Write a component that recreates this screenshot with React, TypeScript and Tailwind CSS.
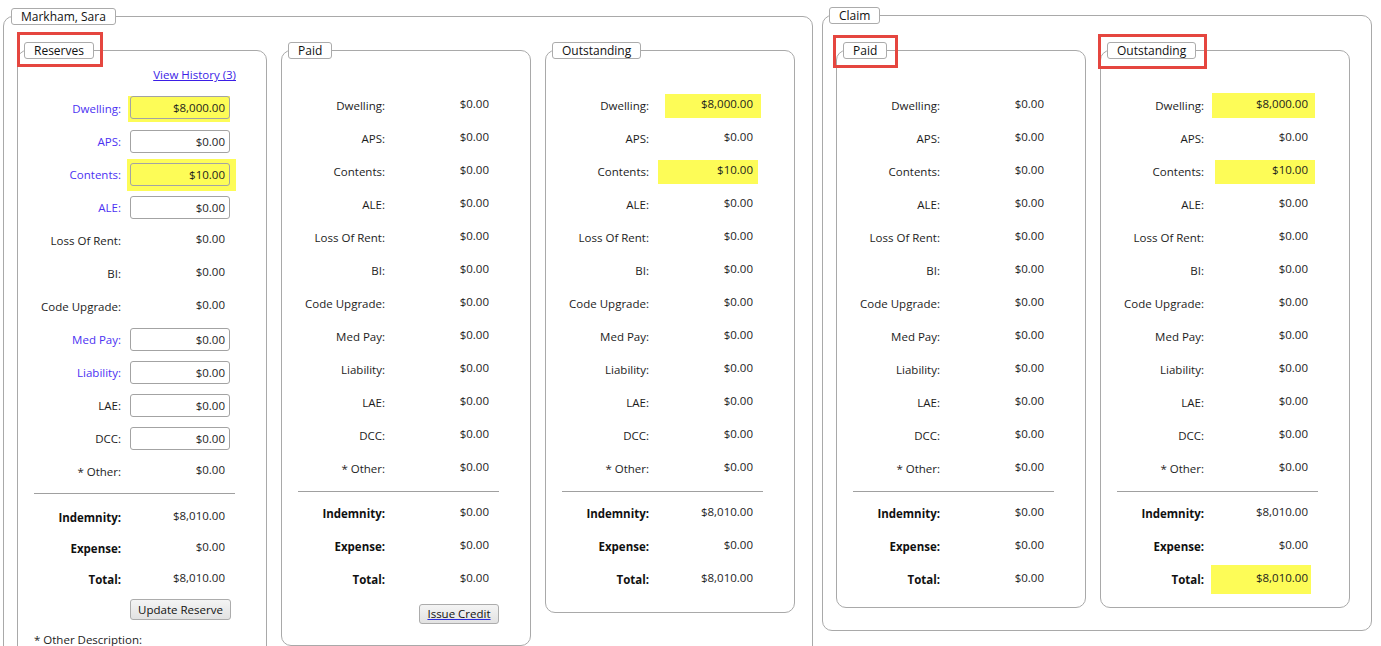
import React from 'react';

type Row = {
  label: string;
  value: string;
  blue?: boolean;
  input?: boolean;
  hl?: string;
};

const names = ['Dwelling', 'APS', 'Contents', 'ALE', 'Loss Of Rent', 'BI', 'Code Upgrade', 'Med Pay', 'Liability', 'LAE', 'DCC'];

const zeroRows = (): Row[] => names.map((n) => ({ label: n, value: '$0.00' }));

function Legend({ title, mark, ml = 'ml-[6px]' }: { title: string; mark?: string; ml?: string }) {
  return (
    <legend
      className={`relative ${ml} h-[17px] rounded-[3px] border border-[#ababab] bg-white px-[9px] text-[12px] leading-[15px] text-[#111]`}
    >
      {title}
      {mark && <span className={`absolute border-[3px] border-[#e5463f] ${mark}`} />}
    </legend>
  );
}

function Label({ text, blue, bold }: { text: string; blue?: boolean; bold?: boolean }) {
  const star = text.startsWith('* ');
  return (
    <div
      className={`w-[103px] shrink-0 text-right ${bold ? 'font-bold text-[#111]' : blue ? 'text-[#4b32f2]' : 'text-[#1c1c1c]'}`}
    >
      {star ? (
        <>
          <span>* </span>
          {text.slice(2)}:
        </>
      ) : (
        `${text}:`
      )}
    </div>
  );
}

function ValueRow({ row }: { row: Row }) {
  return (
    <div className="flex h-[33px] items-center gap-[9px]">
      <Label text={row.label} blue={row.blue} />
      {row.input ? (
        <div className={`flex w-[100px] items-center ${row.hl ?? ''}`}>
          <div
            className={`h-[23px] w-[100px] rounded-[3px] border border-[#a3a3a3] pr-[4px] text-right leading-[21px] ${row.hl ? 'bg-[#fdfc57]' : 'bg-white'}`}
          >
            {row.value}
          </div>
        </div>
      ) : row.hl ? (
        <div className={`flex items-center justify-end bg-[#fdfc57] ${row.hl}`}>
          <span className="pb-[3px]">{row.value}</span>
        </div>
      ) : (
        <div className="w-[100px] pb-[4px] pr-[5px] text-right">{row.value}</div>
      )}
    </div>
  );
}

function TotalRow({ label, value, hl, h = 'h-[33px]' }: { label: string; value: string; hl?: string; h?: string }) {
  return (
    <div className={`flex ${h} items-center gap-[9px]`}>
      <Label text={label} bold />
      {hl ? (
        <div className={`flex items-center justify-end bg-[#fdfc57] ${hl}`}>
          <span className="pb-[3px]">{value}</span>
        </div>
      ) : (
        <div className="w-[100px] pb-[4px] pr-[5px] text-right">{value}</div>
      )}
    </div>
  );
}

function Separator({ mt }: { mt: string }) {
  return <div className={`${mt} ml-[16px] h-px w-[201px] bg-[#a0a0a0]`} />;
}

function Button({ children, className }: { children: React.ReactNode; className: string }) {
  return (
    <div
      className={`flex items-center justify-center rounded-[3px] border border-[#acacac] bg-gradient-to-b from-[#f4f4f4] to-[#e2e2e2] text-[#111] ${className}`}
    >
      {children}
    </div>
  );
}

function Panel({
  title,
  mark,
  children,
}: {
  title: string;
  mark?: string;
  children: React.ReactNode;
}) {
  return (
    <fieldset className="w-[250px] shrink-0 rounded-[10px] border border-[#a9a9a9]">
      <Legend title={title} mark={mark} />
      {children}
    </fieldset>
  );
}

function SummaryRows({
  rows,
  indemnity,
  expense,
  total,
  totalHl,
}: {
  rows: Row[];
  indemnity: string;
  expense: string;
  total: string;
  totalHl?: string;
}) {
  return (
    <>
      <div className="pt-[30px]">
        {rows.map((r) => (
          <ValueRow key={r.label} row={r} />
        ))}
        <ValueRow row={{ label: '* Other', value: '$0.00' }} />
      </div>
      <Separator mt="mt-[6px]" />
      <div className="mt-[5px]">
        <TotalRow label="Indemnity" value={indemnity} />
        <TotalRow label="Expense" value={expense} />
        <TotalRow label="Total" value={total} hl={totalHl} />
      </div>
    </>
  );
}

export default function App() {
  const reserves: Row[] = [
    { label: 'Dwelling', value: '$8,000.00', blue: true, input: true, hl: 'h-[26px] pb-[2px] -ml-[2px] w-[102px] justify-end bg-[#fdfc57]' },
    { label: 'APS', value: '$0.00', blue: true, input: true },
    { label: 'Contents', value: '$10.00', blue: true, input: true, hl: 'h-[32px] -ml-[3px] w-[109px] pl-[3px] bg-[#fdfc57]' },
    { label: 'ALE', value: '$0.00', blue: true, input: true },
    { label: 'Loss Of Rent', value: '$0.00' },
    { label: 'BI', value: '$0.00' },
    { label: 'Code Upgrade', value: '$0.00' },
    { label: 'Med Pay', value: '$0.00', blue: true, input: true },
    { label: 'Liability', value: '$0.00', blue: true, input: true },
    { label: 'LAE', value: '$0.00', input: true },
    { label: 'DCC', value: '$0.00', input: true },
  ];

  const outstanding = (dw: string, ct: string): Row[] =>
    zeroRows().map((r) =>
      r.label === 'Dwelling'
        ? { ...r, value: '$8,000.00', hl: dw }
        : r.label === 'Contents'
          ? { ...r, value: '$10.00', hl: ct }
          : r
    );

  return (
    <div
      className="flex min-h-screen items-start bg-white pl-[3px] pt-[8px] text-[11.5px] text-[#1c1c1c]"
      style={{ fontFamily: '"Open Sans", "Noto Sans", sans-serif' }}
    >
      {/* Markham, Sara */}
      <fieldset className="w-[810px] shrink-0 rounded-[10px] border border-[#a9a9a9]">
        <Legend title="Markham, Sara" ml="ml-[7px]" />
        <div className="flex items-start gap-[14px] pb-[20px] pl-[13px] pr-[17px] pt-[17px]">
          <Panel title="Reserves" mark="-left-[8px] -right-[10px] -top-[11px] -bottom-[9px]">
            <div className="pt-[5px]">
              <div className="flex h-[22px] w-[218px] items-center justify-end">
                <a href="#" className="text-[#3b1ee6] underline">
                  View History (3)
                </a>
              </div>
              <div className="mt-[6px]">
                {reserves.map((r) => (
                  <ValueRow key={r.label} row={r} />
                ))}
                <ValueRow row={{ label: '* Other', value: '$0.00' }} />
              </div>
              <Separator mt="mt-[5px]" />
              <div className="mt-[8px]">
                <TotalRow label="Indemnity" value="$8,010.00" h="h-[31px]" />
                <TotalRow label="Expense" value="$0.00" h="h-[31px]" />
                <TotalRow label="Total" value="$8,010.00" h="h-[31px]" />
              </div>
              <Button className="ml-[112px] mt-[4px] h-[21px] w-[101px]">Update Reserve</Button>
              <div className="ml-[16px] mt-[11px]">* Other Description:</div>
              <div className="ml-[16px] mt-[6px] h-[60px] w-[201px] rounded-[3px] border border-[#a3a3a3]" />
              <div className="h-[20px]" />
            </div>
          </Panel>

          <Panel title="Paid">
            <SummaryRows rows={zeroRows()} indemnity="$0.00" expense="$0.00" total="$0.00" />
            <Button className="ml-[137px] mt-[8px] mb-[21px] h-[20px] w-[80px]">
              <span className="underline decoration-[#2a2ae0]">Issue Credit</span>
            </Button>
          </Panel>

          <Panel title="Outstanding">
            <SummaryRows
              rows={outstanding('ml-[7px] h-[24px] w-[96px] pr-[8px]', 'h-[24px] w-[100px] pr-[5px]')}
              indemnity="$8,010.00"
              expense="$0.00"
              total="$8,010.00"
            />
            <div className="h-[16px]" />
          </Panel>
        </div>
      </fieldset>

      {/* Claim */}
      <fieldset className="ml-[9px] -mt-px w-[550px] shrink-0 rounded-[10px] border border-[#a9a9a9]">
        <Legend title="Claim" />
        <div className="flex items-start gap-[14px] pb-[22px] pl-[13px] pr-[21px] pt-[18px]">
          <Panel title="Paid" mark="-left-[11px] -right-[12px] -top-[8px] -bottom-[10px]">
            <SummaryRows rows={zeroRows()} indemnity="$0.00" expense="$0.00" total="$0.00" />
            <div className="h-[11px]" />
          </Panel>
          <Panel title="Outstanding" mark="-left-[10px] -right-[12px] -top-[9px] -bottom-[11px]">
            <SummaryRows
              rows={outstanding('-ml-px h-[25px] w-[103px] pr-[7px]', 'ml-[2px] h-[24px] w-[100px] pr-[7px]')}
              indemnity="$8,010.00"
              expense="$0.00"
              total="$8,010.00"
              totalHl="-ml-[2px] h-[29px] w-[100px] pr-[3px]"
            />
            <div className="h-[11px]" />
          </Panel>
        </div>
      </fieldset>
    </div>
  );
}
